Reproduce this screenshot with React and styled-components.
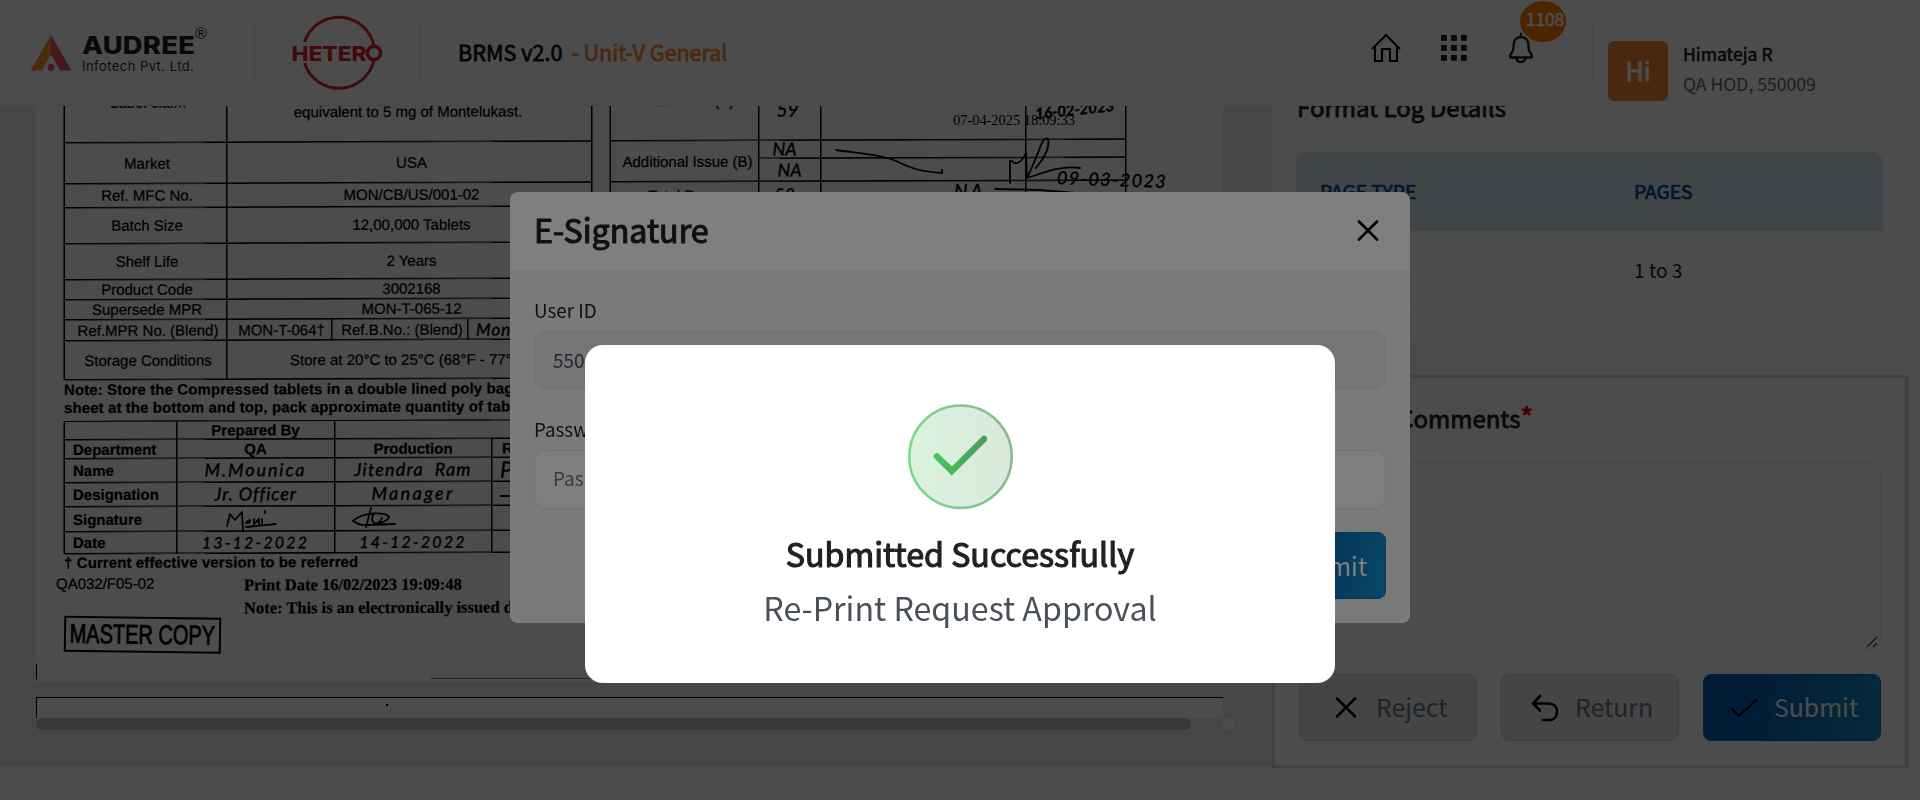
import React from "react";
import styled, { createGlobalStyle } from "styled-components";

const GlobalStyle = createGlobalStyle`
  * { box-sizing: border-box; }
  html, body { margin: 0; padding: 0; }
  body {
    width: 1920px;
    height: 800px;
    overflow: hidden;
    background: #fafafa;
    color: #212121;
    font-family: "Noto Sans CJK SC", "Open Sans", sans-serif;
  }
`;

/* ---------- shared text ---------- */

const Text = styled.span`
  display: block;
  margin-top: ${(p) => -(p.$lift || 0)}px;
  margin-bottom: ${(p) => p.$lift || 0}px;
  font-size: ${(p) => p.$size}px;
  line-height: ${(p) => p.$line}px;
  letter-spacing: ${(p) => p.$spacing || 0}px;
  color: ${(p) => p.$color || "#212121"};
  -webkit-text-stroke: ${(p) => (p.$heavy ? 0.035 : 0)}em currentColor;
  white-space: pre;
`;

/* ---------- page ---------- */

const Page = styled.div`
  width: 1920px;
  height: 800px;
  display: flex;
  flex-direction: column;
  background: #fafafa;
`;

const Header = styled.header`
  flex: none;
  width: 1908px;
  height: 106px;
  display: flex;
  align-items: flex-start;
  background: #fff;
  border-bottom: 1px solid #ebebeb;
`;

const Divider = styled.div`
  width: 1px;
  height: 53px;
  margin-top: 26px;
  margin-left: ${(p) => p.$left}px;
  background: #e4e4e4;
`;

const AudreeMark = styled.svg`
  margin: 35px 0 0 30px;
`;

const AudreeName = styled.div`
  position: relative;
  width: 112px;
  margin: 33px 0 0 10px;
  font-family: Inter, sans-serif;
`;

const BrandWord = styled.div`
  font-size: 24px;
  line-height: 26px;
  font-weight: 800;
  letter-spacing: 0.2px;
  color: #212121;
  transform: scaleX(1.14);
  transform-origin: 0 0;
`;

const BrandSub = styled.div`
  font-family: Inter, sans-serif;
  font-size: 13px;
  line-height: 14px;
  letter-spacing: 0.45px;
  white-space: nowrap;
  color: #2d2d2d;
`;

const Registered = styled.span`
  position: absolute;
  left: 113px;
  top: -8px;
  font-family: "Liberation Sans", sans-serif;
  font-size: 16px;
  line-height: 18px;
`;

const HeteroLogo = styled.svg`
  margin: 12px 0 0 35px;
`;

const ProductTitle = styled.div`
  display: flex;
  gap: 9px;
  margin: 37px 0 0 37px;
`;

const HeaderSpacer = styled.div`
  flex: 1;
`;

const HeaderIcons = styled.div`
  display: flex;
  align-items: center;
  margin: 32px 58px 0 0;
`;

const GridSlot = styled.div`
  display: flex;
  margin: 0 41px 0 39px;
`;

const BellWrap = styled.div`
  position: relative;
  height: 32px;
`;

const Badge = styled.span`
  position: absolute;
  left: 12px;
  top: -31px;
  width: 46px;
  height: 41px;
  border-radius: 50%;
  background: #ff7a00;
  display: flex;
  justify-content: center;
  padding-left: 4px;
`;

const User = styled.div`
  display: flex;
  width: 300px;
  margin: 41px 0 0 15px;
`;

const Avatar = styled.div`
  width: 60px;
  height: 60px;
  border-radius: 6px;
  background: #f58634;
  display: flex;
  justify-content: center;
`;

const UserText = styled.div`
  display: flex;
  flex-direction: column;
  margin: -2px 0 0 15px;
`;

const Main = styled.main`
  height: 662px;
  display: flex;
`;

/* ---------- document viewer ---------- */

const Viewer = styled.section`
  width: 1272px;
  height: 660px;
  padding-left: 36px;
  overflow: hidden;
  background: #e9e9e9;
`;

const Sheet = styled.div`
  position: relative;
  width: 1187px;
  height: 576px;
  overflow: hidden;
  background: #fff;
  color: #000;
  font-family: "Liberation Sans", Arial, sans-serif;
  font-size: 15px;
`;

const Scan = styled.div`
  margin-top: -20px;
  transform: skewY(-0.2deg);
  transform-origin: 29px 0;
  padding-left: 28px;
  -webkit-text-stroke: 0.25px #000;
`;

const ScanTop = styled.div`
  display: flex;
  align-items: flex-start;
  gap: 18px;
`;

const ScanTable = styled.div`
  width: ${(p) => p.$width}px;
  border-left: 1px solid #000;
  border-top: ${(p) => (p.$top ? 1 : 0)}px solid #000;
  box-shadow: -0.5px 0 0 #000;
`;

const ScanRow = styled.div`
  display: grid;
  grid-template-columns: ${(p) => p.$cols};
  grid-template-rows: 100%;
  height: ${(p) => p.$h}px;
`;

const ScanCell = styled.div`
  display: flex;
  align-items: center;
  justify-content: ${(p) => (p.$left ? "flex-start" : "center")};
  padding: ${(p) => p.$pad || "0"};
  border-right: 1px solid #000;
  border-bottom: ${(p) => (p.$open ? 0 : 1)}px solid #000;
  box-shadow: 0.5px ${(p) => (p.$open ? 0 : 0.5)}px 0 #000;
  font-weight: ${(p) => (p.$bold ? 700 : 400)};
  line-height: 17px;
  white-space: pre;
  min-width: 0;
`;

const Stack = styled.div`
  display: flex;
  flex-direction: column;
`;

const Hand = styled.span`
  font-family: Lato, sans-serif;
  font-style: italic;
  font-weight: 400;
  font-size: ${(p) => p.$size || 18}px;
  line-height: 17px;
  letter-spacing: ${(p) => p.$spacing || 0}px;
  -webkit-text-stroke: 0.4px #000;
`;

const Note = styled.div`
  margin: 1px 0 5px;
  font-weight: 700;
  line-height: 17.5px;
  letter-spacing: 0.1px;
  white-space: pre;
`;

const Footnote = styled.div`
  font-weight: 700;
  line-height: 18px;
  letter-spacing: 0.1px;
  white-space: pre;
`;

const ScanFooter = styled.div`
  display: flex;
  margin-top: 2px;
`;

const FooterLeft = styled.div`
  width: 180px;
`;

const FormCode = styled.div`
  margin-left: -8px;
  line-height: 20px;
`;

const Stamp = styled.div`
  width: 157px;
  height: 36px;
  margin-top: 23px;
  border: 2px solid #000;
  transform: rotate(0.9deg);
  display: flex;
  align-items: center;
  justify-content: center;
  font-size: 27px;
  white-space: nowrap;
`;

const Narrow = styled.span`
  transform: scaleX(0.74);
  -webkit-text-stroke: 0.8px #000;
`;

const PrintNote = styled.div`
  margin-top: 1px;
  font-family: "Liberation Serif", "Times New Roman", serif;
  font-size: 16.5px;
  font-weight: 700;
  line-height: 22.5px;
  white-space: pre;
`;

const Ink = styled.svg`
  position: absolute;
  left: 0;
  top: 0;
  fill: none;
  stroke: #000;
  stroke-width: 1.8;
  stroke-linecap: round;
  stroke-linejoin: round;
`;

const Stray = styled.span`
  position: absolute;
  left: ${(p) => p.$x}px;
  top: ${(p) => p.$y}px;
  font-family: ${(p) => (p.$serif ? '"Liberation Serif", serif' : "Lato, sans-serif")};
  font-style: ${(p) => (p.$serif ? "normal" : "italic")};
  font-weight: ${(p) => (p.$bold ? 700 : 400)};
  font-size: ${(p) => p.$size}px;
  line-height: 18px;
  letter-spacing: ${(p) => p.$spacing || 0}px;
  transform: rotate(${(p) => p.$turn || 0}deg);
  -webkit-text-stroke: ${(p) => (p.$serif ? 0 : 0.4)}px #000;
  white-space: pre;
`;

const NextSheet = styled.div`
  width: 1187px;
  height: 21px;
  margin-top: 15px;
  background: #fff;
  border-top: 1px solid #000;
  border-left: 1px solid #000;
  padding: 6px 0 0 349px;
`;

const Speck = styled.div`
  width: 2px;
  height: 2px;
  background: #000;
`;

const ScrollTrack = styled.div`
  width: 1199px;
  height: 12px;
  display: flex;
  justify-content: space-between;
`;

const ScrollThumb = styled.div`
  width: 1155px;
  border-radius: 6px;
  background: #b4bebb;
`;

const ScrollCorner = styled.div`
  width: 12px;
  background: #fafafa;
`;

/* ---------- right column ---------- */

const Side = styled.aside`
  width: 636px;
  display: flex;
  flex-direction: column;
`;

const LogPanel = styled.section`
  height: 234px;
  padding: 0 24px;
  overflow: hidden;
  background: #fff;
`;

const LogTitle = styled.div`
  height: 46px;
  display: flex;
  padding-left: 1px;
  margin-top: -17px;
  margin-bottom: 17px;
`;

const LogTable = styled.div`
  height: 159px;
  border-radius: 12px;
  border-bottom: 1px solid #ececec;
  border-right: 1px solid #f4f4f4;
  overflow: hidden;
`;

const LogRow = styled.div`
  display: grid;
  grid-template-columns: 314px 1fr;
  align-items: center;
  padding-left: 24px;
  height: ${(p) => p.$h}px;
  background: ${(p) => (p.$head ? "#d6e6f0" : "#fff")};
`;

const CommentPanel = styled.section`
  height: 393px;
  margin-top: 35px;
  padding: 24px 24px 0;
  border: 3px solid #dadada;
  background: #fff;
`;

const CommentLabel = styled.div`
  display: flex;
  height: 36px;
  justify-content: flex-end;
  width: 234px;
`;

const CommentBox = styled.div`
  display: flex;
  justify-content: flex-end;
  align-items: flex-end;
  height: 187px;
  width: 582px;
  margin: 25px 0 24px;
  border: 1px solid #e9e9e9;
  border-radius: 12px;
`;

const Actions = styled.div`
  display: flex;
  gap: 24px;
`;

const Button = styled.div`
  width: ${(p) => p.$width || 178}px;
  height: 67px;
  display: flex;
  align-items: center;
  border-radius: 8px;
  border: 1px solid ${(p) => (p.$primary ? "#0f6bb3" : "#cfd4dc")};
  background: ${(p) =>
    p.$primary ? "linear-gradient(100deg, #005bb0 20%, #148fcb 100%)" : "#e4e6ea"};
  padding-left: ${(p) => p.$pad}px;
  gap: ${(p) => p.$gap || 0}px;
`;

/* ---------- dialogs ---------- */

const Backdrop = styled.div`
  position: fixed;
  inset: 0;
  display: flex;
  align-items: flex-start;
  justify-content: center;
  background: rgba(0, 0, 0, ${(p) => p.$dim});
  padding-top: ${(p) => p.$top}px;
`;

const SignDialog = styled.div`
  width: 900px;
  height: 431px;
  border-radius: 8px;
  background: #fff;
  overflow: hidden;
`;

const SignHead = styled.div`
  height: 79px;
  display: flex;
  align-items: center;
  justify-content: space-between;
  padding: 0 31px 0 24px;
  border-bottom: 1px solid #e6e6e6;
`;

const SignBody = styled.div`
  height: 352px;
  padding: 23px 24px 24px;
  display: flex;
  flex-direction: column;
  background: #f3f7f5;
  border-radius: 0 0 18px 18px;
`;

const Field = styled.div`
  display: flex;
  flex-direction: column;
  height: ${(p) => p.$h}px;
`;

const FieldBox = styled.div`
  height: 59px;
  margin-top: ${(p) => p.$top}px;
  display: flex;
  align-items: center;
  padding-left: 18px;
  border-radius: 12px;
  border: 1px solid ${(p) => (p.$disabled ? "#e6e7eb" : "#e4e7e5")};
  background: ${(p) => (p.$disabled ? "#e9eaee" : "#fff")};
`;

const SignFoot = styled.div`
  display: flex;
  justify-content: flex-end;
`;

const Toast = styled.div`
  width: 750px;
  height: 338px;
  border-radius: 18px;
  background: #fff;
  display: flex;
  flex-direction: column;
  align-items: center;
  padding-top: 59px;
`;

const ToastText = styled.div`
  display: flex;
  flex-direction: column;
  align-items: center;
  margin-top: 18px;
`;

/* ---------- icons ---------- */

const CrossIcon = ({ size = 22, w = 2.6 }) => (
  <svg width={size} height={size} viewBox="0 0 22 22" fill="none" stroke="#000" strokeWidth={w} strokeLinecap="round">
    <path d="M2 1.5L20 19.5M20 1.5L2 19.5" />
  </svg>
);

const HomeIcon = () => (
  <svg width="32" height="32" viewBox="0 0 32 32" fill="none" stroke="#000" strokeWidth="2.1">
    <path d="M2 17L16 3L30 17M5 14.5V29H12V17H20V29H27V14.5" />
  </svg>
);

const GridIcon = () => (
  <svg width="26" height="26" viewBox="0 0 26 26" fill="#1c1c1c">
    {[0, 10, 20].map((y) => [0, 10, 20].map((x) => <rect key={`${x}-${y}`} x={x} y={y} width="5.8" height="5.8" />))}
  </svg>
);

const BellIcon = () => (
  <svg width="26" height="32" viewBox="0 0 26 32" fill="none" stroke="#1c1c1c" strokeWidth="2.3" strokeLinecap="round" strokeLinejoin="round">
    <path d="M13 2V5M13 5C8.5 5 5.5 8.5 5.5 13V16C5.5 20 2 21.5 2 24.5C2 25.2 2.4 25.5 3 25.5H23C23.6 25.5 24 25.2 24 24.5C24 21.5 20.5 20 20.5 16V13C20.5 8.5 17.5 5 13 5Z" />
    <path d="M8.5 27C9 29 11 30 13 30C15 30 17 29 17.5 27" />
  </svg>
);

const ReturnIcon = () => (
  <svg width="28" height="28" viewBox="0 0 28 28" fill="none" stroke="#000" strokeWidth="2.6" strokeLinecap="round" strokeLinejoin="round">
    <path d="M9 2L2 9.5L9 16.5M2.5 9.5H18C23 9.5 26 13 26 17.5C26 22.5 23 26 18.5 26H12" />
  </svg>
);

const TickIcon = () => (
  <svg width="28" height="20" viewBox="0 0 28 20" fill="none" stroke="#000" strokeWidth="2.4" strokeLinecap="round" strokeLinejoin="round">
    <path d="M2 11L9 18L26 2" />
  </svg>
);

const GripIcon = () => (
  <svg width="14" height="14" viewBox="0 0 14 14" stroke="#222" strokeWidth="1.1">
    <path d="M1 12L11 2M7 12L11 8" />
  </svg>
);

const SuccessIcon = () => (
  <svg width="106" height="106" viewBox="0 0 106 106" fill="none">
    <defs>
      <linearGradient id="okFill" x1="0" y1="0" x2="1" y2="0">
        <stop offset="0" stopColor="#d9f3dd" />
        <stop offset="1" stopColor="#dbe9dd" />
      </linearGradient>
      <linearGradient id="okRing" x1="0" y1="0" x2="1" y2="0">
        <stop offset="0" stopColor="#7ed88d" />
        <stop offset="1" stopColor="#86bb90" />
      </linearGradient>
      <linearGradient id="okTick" x1="0" y1="0" x2="1" y2="0">
        <stop offset="0" stopColor="#44c55c" />
        <stop offset="1" stopColor="#4b9d58" />
      </linearGradient>
    </defs>
    <circle cx="53.5" cy="52.7" r="51.2" fill="url(#okFill)" stroke="url(#okRing)" strokeWidth="2.6" />
    <path d="M30 52.5L44.8 67L77 35" stroke="url(#okTick)" strokeWidth="6.4" strokeLinecap="round" />
  </svg>
);

/* ---------- content ---------- */

const infoRows = [
  ["Market", "USA", 41],
  ["Ref. MFC No.", "MON/CB/US/001-02", 24],
  ["Batch Size", "12,00,000 Tablets", 36],
  ["Shelf Life", "2 Years", 36],
  ["Product Code", "3002168", 20],
  ["Supersede MPR", "MON-T-065-12", 20],
];

const INFO = "162px 1fr";
const ISSUE = "148px 62px 205px 1fr";

const signRows = [
  { label: "Name", h: 24, a: "M.Mounica", b: "Jitendra  Ram", size: 18, sp: [1.9, 1.2] },
  { label: "Designation", h: 24, a: "Jr. Officer", b: "Manager", size: 18, sp: [0.9, 2.4] },
  { label: "Signature", h: 25, a: "", b: "", size: 18, sp: [0, 0] },
  { label: "Date", h: 22, a: "13-12-2022", b: "14-12-2022", size: 16, sp: [2.2, 2.2] },
];

function DocumentScan() {
  return (
    <Sheet>
      <Scan>
        <ScanTop>
          <ScanTable $width={528}>
            <ScanRow $cols={INFO} $h={57}>
              <ScanCell $pad="0 0 23px 5px">Label claim</ScanCell>
              <ScanCell $pad="0 2px 3px 0">equivalent to 5 mg of Montelukast.</ScanCell>
            </ScanRow>
            {infoRows.map(([name, value, h]) => (
              <ScanRow key={name} $cols={INFO} $h={h}>
                <ScanCell $pad="0 0 0 3px">{name}</ScanCell>
                <ScanCell $pad="0 0 0 5px">{value}</ScanCell>
              </ScanRow>
            ))}
            <ScanRow $cols="162px 105px 136px 1fr" $h={21}>
              <ScanCell $pad="0 0 0 5px">Ref.MPR No. (Blend)</ScanCell>
              <ScanCell $pad="0 0 0 5px">MON-T-064†</ScanCell>
              <ScanCell $pad="0 0 0 5px">Ref.B.No.: (Blend)</ScanCell>
              <ScanCell $left $pad="0 0 0 8px"><Hand $size={17} $spacing={1}>Mon</Hand></ScanCell>
            </ScanRow>
            <ScanRow $cols={INFO} $h={39}>
              <ScanCell $pad="0 0 0 5px">Storage Conditions</ScanCell>
              <ScanCell $left $pad="0 0 0 63px">Store at 20°C to 25°C (68°F - 77°F)</ScanCell>
            </ScanRow>
          </ScanTable>
          <ScanTable $width={516}>
            <ScanRow $cols={ISSUE} $h={57}>
              <ScanCell $pad="0 0 24px 6px">First Issue (A)</ScanCell>
              <ScanCell $pad="0 4px 6px 0"><Hand $size={19}>59</Hand></ScanCell>
              <ScanCell />
              <ScanCell />
            </ScanRow>
            <ScanRow $cols={ISSUE} $h={41}>
              <ScanCell $pad="0 0 0 6px">Additional Issue (B)</ScanCell>
              {["a", "b", "c"].map((k) => (
                <Stack key={k}>
                  <ScanRow $cols="1fr" $h={18}>
                    <ScanCell $pad="0 10px 0 0">{k === "a" && <Hand>NA</Hand>}</ScanCell>
                  </ScanRow>
                  <ScanRow $cols="1fr" $h={23}>
                    <ScanCell>{k === "a" && <Hand>NA</Hand>}</ScanCell>
                  </ScanRow>
                </Stack>
              ))}
            </ScanRow>
            <ScanRow $cols={ISSUE} $h={26}>
              <ScanCell $open $pad="0 0 0 6px">Total Pages</ScanCell>
              <ScanCell $open $pad="0 10px 0 0"><Hand>58</Hand></ScanCell>
              <ScanCell $open />
              <ScanCell $open />
            </ScanRow>
          </ScanTable>
        </ScanTop>
        <Note>
          {"Note: Store the Compressed tablets in a double lined poly bag\nsheet at the bottom and top, pack approximate quantity of tablets"}
        </Note>
        <ScanTable $width={600} $top>
          <ScanRow $cols="112px 158px 1fr" $h={18}>
            <ScanCell />
            <ScanCell $bold>Prepared By</ScanCell>
            <ScanCell />
          </ScanRow>
          <ScanRow $cols="112px 158px 157px 1fr" $h={19}>
            <ScanCell $bold $left $pad="0 0 0 8px">Department</ScanCell>
            <ScanCell $bold>QA</ScanCell>
            <ScanCell $bold>Production</ScanCell>
            <ScanCell $bold $left $pad="0 0 0 10px">R&amp;D</ScanCell>
          </ScanRow>
          {signRows.map((r) => (
            <ScanRow key={r.label} $cols="112px 158px 157px 1fr" $h={r.h}>
              <ScanCell $bold $left $pad="0 0 0 8px">{r.label}</ScanCell>
              <ScanCell><Hand $size={r.size} $spacing={r.sp[0]}>{r.a}</Hand></ScanCell>
              <ScanCell><Hand $size={r.size} $spacing={r.sp[1]}>{r.b}</Hand></ScanCell>
              <ScanCell $left $pad="0 0 0 8px">{r.label === "Name" && <Hand $size={22}>P</Hand>}</ScanCell>
            </ScanRow>
          ))}
        </ScanTable>
        <Footnote>† Current effective version to be referred</Footnote>
        <ScanFooter>
          <FooterLeft>
            <FormCode>QA032/F05-02</FormCode>
            <Stamp><Narrow>MASTER COPY</Narrow></Stamp>
          </FooterLeft>
          <PrintNote>
            {"Print Date 16/02/2023 19:09:48\nNote: This is an electronically issued document"}
          </PrintNote>
        </ScanFooter>
      </Scan>
      <Ink width="1187" height="576" viewBox="36 106 1187 576">
        <path d="M836 150C856 153 880 154 896 161C914 170 926 172 942 173V170" />
        <path d="M1010 161L1010 183M1012 161C1016 166 1022 162 1026 153L1027 178C1031 170 1036 158 1041 145C1044 138 1050 134 1048 146C1046 158 1038 164 1036 168M1027 178C1040 174 1060 165 1080 168" />
        <path d="M995 189L1040 190L1075 193" />
        <path d="M227 526L230 514L235 520L242 512L243 531M246 523C250 518 252 521 248 523M254 519V524L259 519V524M262 519V523M265 511V513M246 527L276 524" />
        <path d="M353 521C364 511 388 512 389 517C387 524 362 528 355 522M371 508L366 527M374 513C368 524 378 527 382 518M366 525L395 524" />
        <path d="M501 496H512" />
        <g strokeWidth="1">
          <path d="M36.5 664V679" />
          <path d="M431 678.5H700" stroke="#888" />
        </g>
      </Ink>
      <Stray $serif $x={917} $y={5} $size={14.4}>07-04-2025 18:09:33</Stray>
      <Stray $bold $x={999} $y={-6} $size={15} $turn={-6}>16-02-2023</Stray>
      <Stray $x={1021} $y={64} $size={18} $spacing={1.4} $turn={2}>09-03-2023</Stray>
      <Stray $x={918} $y={76} $size={19} $spacing={3}>NA</Stray>
    </Sheet>
  );
}

function AppHeader() {
  return (
    <Header>
      <AudreeMark width="42" height="37" viewBox="0 0 42 37">
        <path d="M21 0L0.5 35.5H12L21 19.5Z" fill="#f7942a" />
        <path d="M21 0L41.5 35.5H30L21 19.5Z" fill="#e0526b" />
        <circle cx="21" cy="32.5" r="3.4" fill="#e0526b" />
      </AudreeMark>
      <AudreeName>
        <BrandWord>AUDREE</BrandWord>
        <BrandSub>Infotech Pvt. Ltd.</BrandSub>
        <Registered>®</Registered>
      </AudreeName>
      <Divider $left={60} />
      <HeteroLogo width="94" height="80" viewBox="0 0 94 80">
        <g fill="none" stroke="#e02430" strokeWidth="3">
          <path d="M14.5 30A36 36 0 0 1 84 34" />
          <path d="M14.5 51A36 36 0 0 0 84 48" />
          <circle cx="84" cy="41" r="6.6" strokeWidth="3.6" />
        </g>
        <text x="1.5" y="48.6" fill="#e02430" fontFamily="Inter, sans-serif" fontWeight="800" fontSize="20.5" textLength="75" lengthAdjust="spacingAndGlyphs">
          HETER
        </text>
      </HeteroLogo>
      <Divider $left={36} />
      <ProductTitle>
        <Text $size={21.6} $line={32} $lift={1} $heavy $color="#111">BRMS v2.0</Text>
        <Text $size={21.6} $line={32} $lift={1} $spacing={-0.05} $heavy $color="#f58634">- Unit-V General</Text>
      </ProductTitle>
      <HeaderSpacer />
      <HeaderIcons>
        <HomeIcon />
        <GridSlot><GridIcon /></GridSlot>
        <BellWrap>
          <BellIcon />
          <Badge><Text $size={17.6} $line={38} $lift={1} $spacing={-0.3} $heavy $color="#fff">1108</Text></Badge>
        </BellWrap>
      </HeaderIcons>
      <Divider $left={0} />
      <User>
        <Avatar><Text $size={25} $line={58} $heavy $color="#fff">Hi</Text></Avatar>
        <UserText>
          <Text $size={17.6} $line={30} $heavy>Himateja R</Text>
          <Text $size={17.6} $line={30} $color="#5f6368">QA HOD, 550009</Text>
        </UserText>
      </User>
    </Header>
  );
}

export default function App() {
  return (
    <>
      <GlobalStyle />
      <Page>
        <AppHeader />
        <Main>
          <Viewer>
            <DocumentScan />
            <NextSheet><Speck /></NextSheet>
            <ScrollTrack>
              <ScrollThumb />
              <ScrollCorner />
            </ScrollTrack>
          </Viewer>
          <Side>
            <LogPanel>
              <LogTitle>
                <Text $size={24} $line={36} $heavy>Format Log Details</Text>
              </LogTitle>
              <LogTable>
                <LogRow $head $h={79}>
                  <Text $size={19.2} $line={28} $lift={1} $heavy $color="#004b8d">PAGE TYPE</Text>
                  <Text $size={19.2} $line={28} $lift={1} $heavy $color="#004b8d">PAGES</Text>
                </LogRow>
                <LogRow $h={80}>
                  <span />
                  <Text $size={19.2} $line={28} $lift={1}>1 to 3</Text>
                </LogRow>
              </LogTable>
            </LogPanel>
            <CommentPanel>
              <CommentLabel>
                <Text $size={24} $line={36} $lift={2} $heavy>Comments</Text>
                <Text $size={27} $line={30} $heavy $color="#e00000">*</Text>
              </CommentLabel>
              <CommentBox><GripIcon /></CommentBox>
              <Actions>
                <Button $pad={35} $gap={19}>
                  <CrossIcon />
                  <Text $size={24.8} $line={36} $lift={2} $color="#6c757d">Reject</Text>
                </Button>
                <Button $pad={29} $gap={16}>
                  <ReturnIcon />
                  <Text $size={24.8} $line={36} $lift={2} $color="#6c757d">Return</Text>
                </Button>
                <Button $primary $pad={26} $gap={16}>
                  <TickIcon />
                  <Text $size={24.8} $line={36} $lift={2} $color="#fff">Submit</Text>
                </Button>
              </Actions>
            </CommentPanel>
          </Side>
        </Main>
      </Page>

      <Backdrop $dim={0.4} $top={192}>
        <SignDialog>
          <SignHead>
            <Text $size={32.2} $line={44} $lift={2} $heavy>E-Signature</Text>
            <CrossIcon size={22} w={2.6} />
          </SignHead>
          <SignBody>
            <Field $h={119}>
              <Text $size={18.8} $line={32}>User ID</Text>
              <FieldBox $disabled $top={5}>
                <Text $size={19} $line={28} $lift={1} $color="#495057">550009</Text>
              </FieldBox>
            </Field>
            <Field $h={120}>
              <Text $size={18.8} $line={32}>Password</Text>
              <FieldBox $top={5}>
                <Text $size={19} $line={28} $lift={1} $color="#6c757d">Password</Text>
              </FieldBox>
            </Field>
            <SignFoot>
              <Button $primary $width={124} $pad={20}>
                <Text $size={24.8} $line={36} $lift={1} $color="#fff">Submit</Text>
              </Button>
            </SignFoot>
          </SignBody>
        </SignDialog>
      </Backdrop>

      <Backdrop $dim={0.5} $top={345}>
        <Toast>
          <SuccessIcon />
          <ToastText>
            <Text $size={32.2} $line={54} $lift={2} $heavy>Submitted Successfully</Text>
            <Text $size={32.2} $line={54} $lift={2} $color="#495057">Re-Print Request Approval</Text>
          </ToastText>
        </Toast>
      </Backdrop>
    </>
  );
}
